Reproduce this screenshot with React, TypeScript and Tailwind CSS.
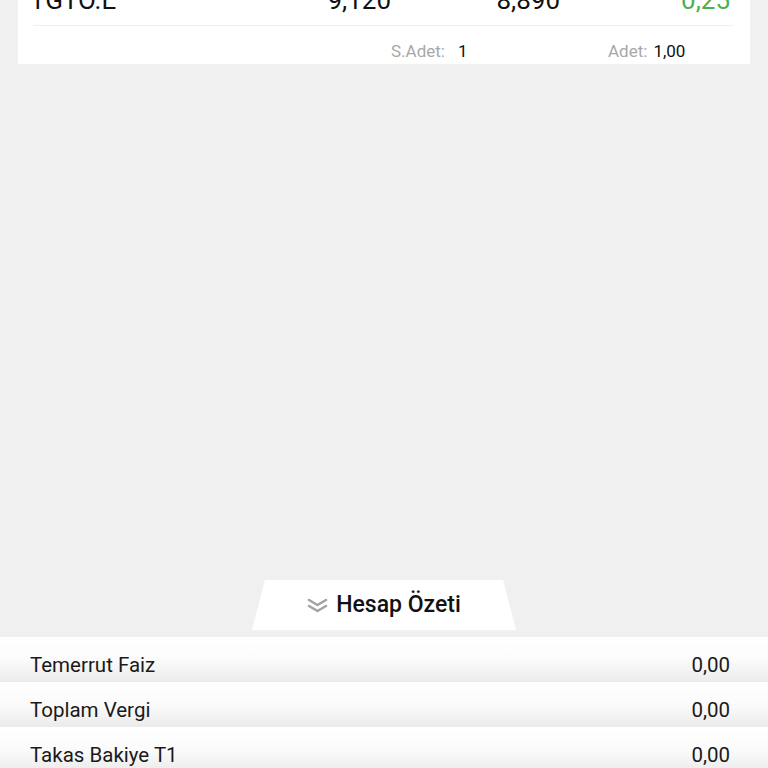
import React from 'react';

// --- Account summary rows ---
const summaryRows = [
  { label: 'Temerrut Faiz', value: '0,00' },
  { label: 'Toplam Vergi', value: '0,00' },
  { label: 'Takas Bakiye T1', value: '0,00' },
];

const DoubleChevron: React.FC = () => (
  <svg width="21" height="15" viewBox="0 0 21 15" fill="none" stroke="#a3a3a3" strokeWidth="2.6" strokeLinecap="round" strokeLinejoin="round">
    <polyline points="2,2 10.5,7 19,2" />
    <polyline points="2,8 10.5,13 19,8" />
  </svg>
);

export default function App() {
  return (
    <div className="h-[768px] w-full overflow-hidden bg-[#f0f0f0] flex flex-col font-['Roboto',sans-serif]">
      {/* Position card (scrolled, top part cut off) */}
      <div className="mx-[18px] h-[64px] shrink-0 bg-white flex flex-col">
        <div className="-mt-[25px] h-[50px] shrink-0 flex items-center pl-[12px] pr-[19px] text-[26px] text-[#111]">
          <span className="w-[201px]">TGTO.E</span>
          <span className="w-[160px] text-right">9,120</span>
          <span className="w-[169px] text-right">8,890</span>
          <span className="w-[170px] text-right text-[#4caf50]">0,25</span>
        </div>
        <div className="ml-[15px] mr-[17px] h-px bg-[#f0f0f0]" />
        <div className="flex pl-[373px] pt-[15px] text-[17px] leading-[20px]">
          <div className="w-[217px] flex">
            <span className="text-[#a8a8a8]">S.Adet:</span>
            <span className="ml-[13px] text-[#111]">1</span>
          </div>
          <span className="text-[#a8a8a8]">Adet:</span>
          <span className="ml-[6px] text-[#111]">1,00</span>
        </div>
      </div>

      {/* Hesap Özeti tab */}
      <div className="mt-[516px] shrink-0 self-center w-[264px] h-[50px] bg-white [clip-path:polygon(13px_0,calc(100%-13px)_0,100%_100%,0_100%)] flex items-center justify-center gap-[8px]">
        <DoubleChevron />
        <span className="text-[23px] font-medium text-[#111]">Hesap Özeti</span>
      </div>

      <div className="h-[7px] shrink-0" />

      {/* Summary list */}
      <div className="flex flex-col shrink-0">
        {summaryRows.map((row) => (
          <div
            key={row.label}
            className="h-[45px] shrink-0 flex items-start justify-between pt-[16px] pl-[30px] pr-[38px] bg-gradient-to-b from-white via-[#fbfbfb] to-[#ebebeb] text-[20.5px] leading-[24px] text-[#1a1a1a]"
          >
            <span>{row.label}</span>
            <span>{row.value}</span>
          </div>
        ))}
      </div>
    </div>
  );
}
